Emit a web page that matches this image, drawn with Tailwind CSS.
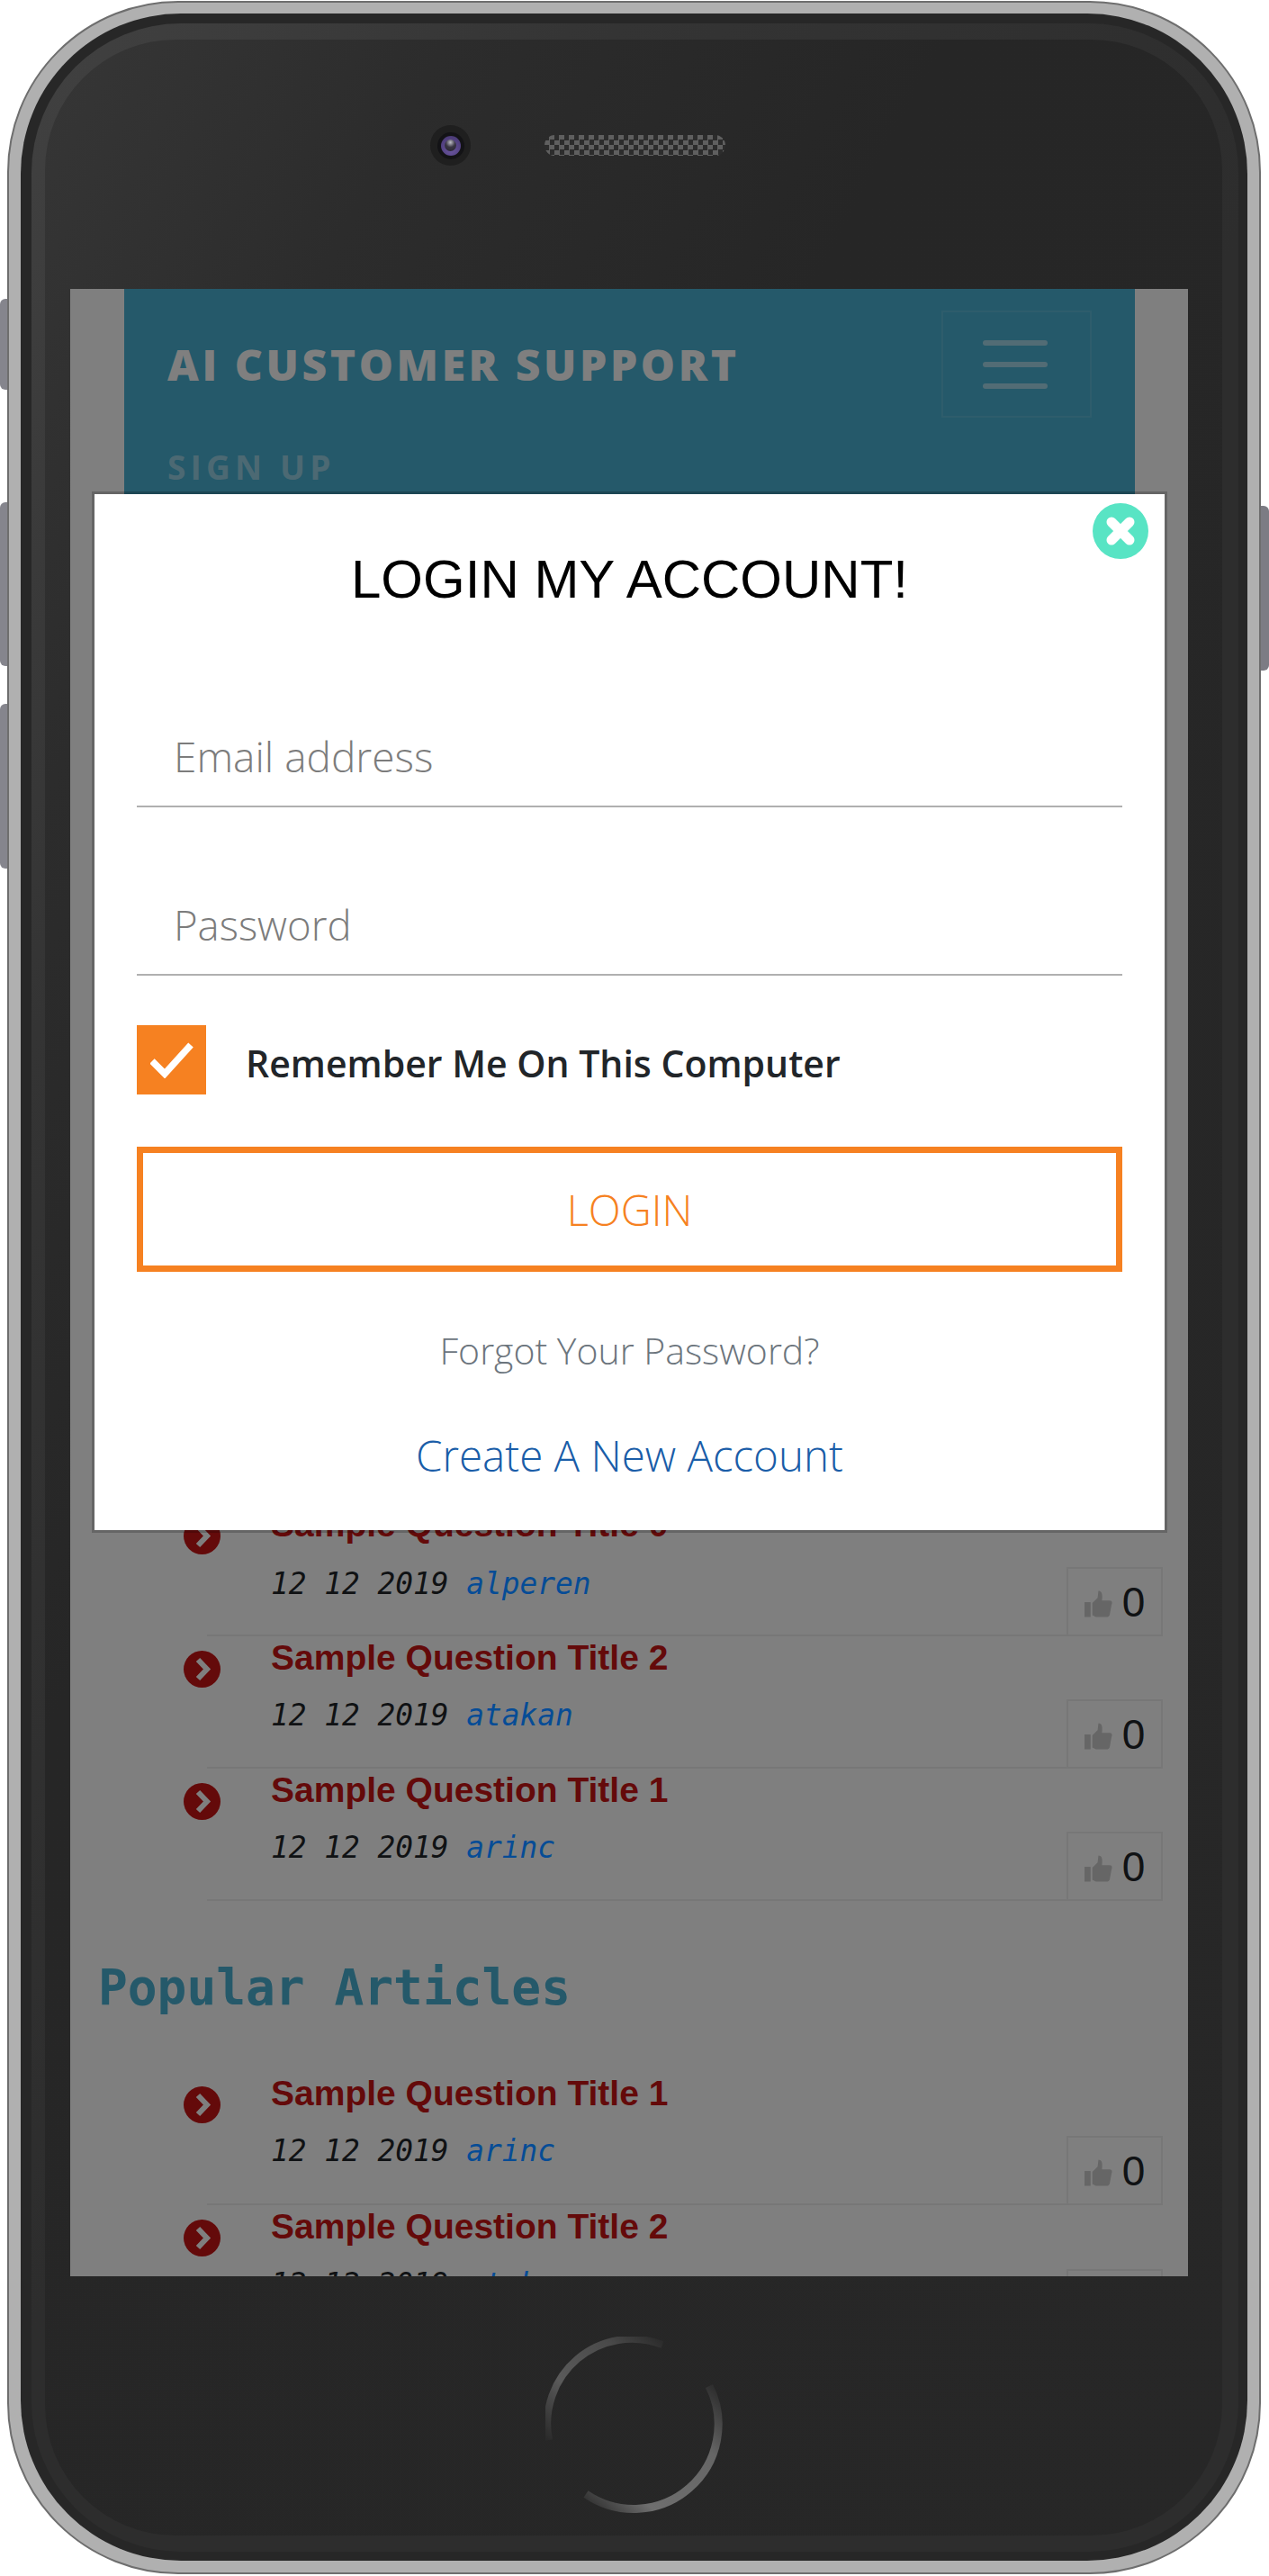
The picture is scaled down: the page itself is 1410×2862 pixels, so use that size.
<!doctype html>
<html>
<head>
<meta charset="utf-8">
<script src="https://cdn.jsdelivr.net/npm/@tailwindcss/browser@4"></script>
</head>
<body class="bg-white">
<div class="relative w-[1410px] h-[2862px] overflow-hidden pt-[1px] pl-[8px]">
  <!-- hardware buttons -->
  <div class="absolute left-0 top-[332px] w-[10px] h-[101px] rounded-l-[6px] bg-[#85858d]"></div>
  <div class="absolute left-0 top-[558px] w-[10px] h-[182px] rounded-l-[6px] bg-[#85858d]"></div>
  <div class="absolute left-0 top-[782px] w-[10px] h-[183px] rounded-l-[6px] bg-[#85858d]"></div>
  <div class="absolute left-[1398px] top-[562px] w-[12px] h-[183px] rounded-r-[6px] bg-[#7c7c84]"></div>

  <!-- phone body -->
  <div class="relative w-[1393px] h-[2859px] rounded-[190px] border-[2px] border-[#6e6e6e] bg-[#b0b0b0] pl-[13px] pr-[13px] pt-[12px] pb-[13px]">
    <div class="w-full h-full rounded-[178px] bg-[#272727] pl-[12px] pr-[10px] pt-[11px] pb-[10px]">
      <div class="w-full h-full rounded-[166px] bg-[linear-gradient(120deg,#414141_0%,#343434_22%,#2d2d2d_50%,#2d2d2d_100%)] pl-[15px] pr-[18px] pt-[18px] pb-[18px]">
        <div class="w-full h-full rounded-[145px] bg-[linear-gradient(118deg,#363636_0%,#2c2c2c_16%,#262626_36%,#272727_100%)] pl-[28px]">

          <!-- top bezel -->
          <div class="h-[277px] flex items-start pl-[400px] pt-[95px]">
            <div class="w-[45px] h-[45px] rounded-full bg-[#1f1f1f] flex items-center justify-center">
              <div class="w-[30px] h-[30px] rounded-full bg-[#131316] flex items-center justify-center">
                <div class="w-[22px] h-[22px] rounded-full bg-[radial-gradient(circle_at_50%_70%,#6a55a0_0%,#43346c_100%)] flex items-center justify-center">
                  <div class="w-[13px] h-[13px] rounded-full bg-[radial-gradient(circle_at_50%_25%,#bdbdc6_0%,#3a3644_45%,#26232e_100%)]"></div>
                </div>
              </div>
            </div>
            <div class="ml-[82px] mt-[11px] w-[201px] h-[23px] rounded-full bg-[repeating-conic-gradient(#5f5f5f_0%_25%,#2c2c2c_0%_50%)] bg-[length:11px_11px]"></div>
          </div>

          <!-- screen -->
          <div class="relative w-[1242px] h-[2208px] overflow-hidden bg-white">
            <header class="ml-[60px] w-[1123px] h-[300px] bg-[#4ab2d4] pl-[48px] pr-[48px] pt-[24px]">
              <div class="flex justify-between items-start">
                <div class="mt-[28px] font-['Open_Sans',sans-serif] font-extrabold text-[48px] leading-[64px] tracking-[3.6px] text-white">AI CUSTOMER SUPPORT</div>
                <div class="w-[167px] h-[119px] border-[2px] border-white/10 flex flex-col items-center justify-center gap-[18px] pr-[4px]">
                  <div class="w-[72px] h-[6px] rounded-full bg-white/50"></div>
                  <div class="w-[72px] h-[6px] rounded-full bg-white/50"></div>
                  <div class="w-[72px] h-[6px] rounded-full bg-white/50"></div>
                </div>
              </div>
              <div class="mt-[31px] font-['Open_Sans',sans-serif] font-bold text-[37px] leading-[48px] tracking-[5.2px] text-white/45">SIGN UP</div>
            </header>

            <main class="pt-[1049px]">
              <!-- Questions -->
              <div class="flex h-[146px] pl-[126px] pr-[28px]">
                <svg class="w-[41px] h-[41px] mt-[16px] shrink-0" viewBox="0 0 41 41"><circle cx="20.5" cy="20.5" r="20.5" fill="#c81414"/><path d="M16 10 26 20.500 16 31" fill="none" stroke="#fff" stroke-width="6"/></svg>
                <div class="ml-[56px] flex-1 pt-[1px]">
                  <div class="font-['Liberation_Sans',sans-serif] font-bold text-[39px] leading-[46px] text-[#c81414]">Sample Question Title 0</div>
                  <div class="mt-[21px] font-['DejaVu_Sans_Mono',monospace] italic text-[32.8px] leading-[44px] text-[#212529]">12 12 2019 <span class="relative z-10 text-[#064c96]">alperen</span></div>
                </div>
                <div class="self-end flex items-center justify-center gap-[11px] w-[107px] h-[75px] border-[2px] border-[#eeeeee] border-b-0 text-[#212529] font-['Liberation_Sans',sans-serif] text-[46px] leading-[50px]">
                  <svg class="w-[31px] h-[30px] mt-[4px]" viewBox="0 0 32 30" fill="#cccccc"><path d="M0 13h7v17H0z"/><path d="M9 14 15 8 16 0C20 0 21 4 20 11H29C32 11 32 14 31 16L29 27C28.500 29 27 30 25 30H13L9 28Z"/></svg><span>0</span>
                </div>
              </div>
              <div class="ml-[152px] mr-[28px] h-[2px] bg-[#eeeeee]"></div>

              <div class="flex h-[145px] pl-[126px] pr-[28px]">
                <svg class="w-[41px] h-[41px] mt-[16px] shrink-0" viewBox="0 0 41 41"><circle cx="20.5" cy="20.5" r="20.5" fill="#c81414"/><path d="M16 10 26 20.500 16 31" fill="none" stroke="#fff" stroke-width="6"/></svg>
                <div class="ml-[56px] flex-1 pt-[1px]">
                  <div class="font-['Liberation_Sans',sans-serif] font-bold text-[39px] leading-[46px] text-[#c81414]">Sample Question Title 2</div>
                  <div class="mt-[19px] font-['DejaVu_Sans_Mono',monospace] italic text-[32.8px] leading-[44px] text-[#212529]">12 12 2019 <span class="relative z-10 text-[#064c96]">atakan</span></div>
                </div>
                <div class="self-end flex items-center justify-center gap-[11px] w-[107px] h-[75px] border-[2px] border-[#eeeeee] border-b-0 text-[#212529] font-['Liberation_Sans',sans-serif] text-[46px] leading-[50px]">
                  <svg class="w-[31px] h-[30px] mt-[4px]" viewBox="0 0 32 30" fill="#cccccc"><path d="M0 13h7v17H0z"/><path d="M9 14 15 8 16 0C20 0 21 4 20 11H29C32 11 32 14 31 16L29 27C28.500 29 27 30 25 30H13L9 28Z"/></svg><span>0</span>
                </div>
              </div>
              <div class="ml-[152px] mr-[28px] h-[2px] bg-[#eeeeee]"></div>

              <div class="flex h-[145px] pl-[126px] pr-[28px]">
                <svg class="w-[41px] h-[41px] mt-[16px] shrink-0" viewBox="0 0 41 41"><circle cx="20.5" cy="20.5" r="20.5" fill="#c81414"/><path d="M16 10 26 20.500 16 31" fill="none" stroke="#fff" stroke-width="6"/></svg>
                <div class="ml-[56px] flex-1 pt-[1px]">
                  <div class="font-['Liberation_Sans',sans-serif] font-bold text-[39px] leading-[46px] text-[#c81414]">Sample Question Title 1</div>
                  <div class="mt-[19px] font-['DejaVu_Sans_Mono',monospace] italic text-[32.8px] leading-[44px] text-[#212529]">12 12 2019 <span class="relative z-10 text-[#064c96]">arinc</span></div>
                </div>
                <div class="self-end flex items-center justify-center gap-[11px] w-[107px] h-[75px] border-[2px] border-[#eeeeee] border-b-0 text-[#212529] font-['Liberation_Sans',sans-serif] text-[46px] leading-[50px]">
                  <svg class="w-[31px] h-[30px] mt-[4px]" viewBox="0 0 32 30" fill="#cccccc"><path d="M0 13h7v17H0z"/><path d="M9 14 15 8 16 0C20 0 21 4 20 11H29C32 11 32 14 31 16L29 27C28.500 29 27 30 25 30H13L9 28Z"/></svg><span>0</span>
                </div>
              </div>
              <div class="ml-[152px] mr-[28px] h-[2px] bg-[#eeeeee]"></div>

              <!-- Popular -->
              <h2 class="h-[190px] pl-[31px] pt-[61px] font-['DejaVu_Sans_Mono',monospace] font-bold text-[54.5px] leading-[70px] text-[#4ab2d4]">Popular Articles</h2>

              <div class="flex h-[146px] pl-[126px] pr-[28px]">
                <svg class="w-[41px] h-[41px] mt-[16px] shrink-0" viewBox="0 0 41 41"><circle cx="20.5" cy="20.5" r="20.5" fill="#c81414"/><path d="M16 10 26 20.500 16 31" fill="none" stroke="#fff" stroke-width="6"/></svg>
                <div class="ml-[56px] flex-1 pt-[1px]">
                  <div class="font-['Liberation_Sans',sans-serif] font-bold text-[39px] leading-[46px] text-[#c81414]">Sample Question Title 1</div>
                  <div class="mt-[19px] font-['DejaVu_Sans_Mono',monospace] italic text-[32.8px] leading-[44px] text-[#212529]">12 12 2019 <span class="relative z-10 text-[#064c96]">arinc</span></div>
                </div>
                <div class="self-end flex items-center justify-center gap-[11px] w-[107px] h-[75px] border-[2px] border-[#eeeeee] border-b-0 text-[#212529] font-['Liberation_Sans',sans-serif] text-[46px] leading-[50px]">
                  <svg class="w-[31px] h-[30px] mt-[4px]" viewBox="0 0 32 30" fill="#cccccc"><path d="M0 13h7v17H0z"/><path d="M9 14 15 8 16 0C20 0 21 4 20 11H29C32 11 32 14 31 16L29 27C28.500 29 27 30 25 30H13L9 28Z"/></svg><span>0</span>
                </div>
              </div>
              <div class="ml-[152px] mr-[28px] h-[2px] bg-[#eeeeee]"></div>

              <div class="flex h-[146px] pl-[126px] pr-[28px]">
                <svg class="w-[41px] h-[41px] mt-[16px] shrink-0" viewBox="0 0 41 41"><circle cx="20.5" cy="20.5" r="20.5" fill="#c81414"/><path d="M16 10 26 20.500 16 31" fill="none" stroke="#fff" stroke-width="6"/></svg>
                <div class="ml-[56px] flex-1 pt-[1px]">
                  <div class="font-['Liberation_Sans',sans-serif] font-bold text-[39px] leading-[46px] text-[#c81414]">Sample Question Title 2</div>
                  <div class="mt-[19px] font-['DejaVu_Sans_Mono',monospace] italic text-[32.8px] leading-[44px] text-[#212529]">12 12 2019 <span class="relative z-10 text-[#064c96]">atakan</span></div>
                </div>
                <div class="self-end flex items-center justify-center gap-[11px] w-[107px] h-[75px] border-[2px] border-[#eeeeee] border-b-0 text-[#212529] font-['Liberation_Sans',sans-serif] text-[46px] leading-[50px]">
                  <svg class="w-[31px] h-[30px] mt-[4px]" viewBox="0 0 32 30" fill="#cccccc"><path d="M0 13h7v17H0z"/><path d="M9 14 15 8 16 0C20 0 21 4 20 11H29C32 11 32 14 31 16L29 27C28.500 29 27 30 25 30H13L9 28Z"/></svg><span>0</span>
                </div>
              </div>
            </main>

            <!-- backdrop -->
            <div class="absolute inset-0 bg-black/50"></div>

            <!-- modal -->
            <div class="absolute z-20 left-[24px] top-[225px] w-[1195px] h-[1157px] border-[3px] border-black/20 bg-white bg-clip-padding">
              <div class="relative px-[47px] text-center">
                <svg class="absolute right-[18px] top-[10px] w-[62px] h-[62px]" viewBox="0 0 62 62"><circle cx="31" cy="31" r="31" fill="#58e4c4"/><path d="M21 21 41 41M41 21 21 41" stroke="#fff" stroke-width="11" stroke-linecap="round"/></svg>
                <h1 class="h-[252px] pt-[55px] font-['Liberation_Sans',sans-serif] text-[60px] leading-[80px] text-black">LOGIN MY ACCOUNT!</h1>
                <div class="h-[96px] pt-[9px] border-b-[2px] border-[#b0b0b0] pl-[41px] text-left font-['Open_Sans',sans-serif] font-light text-[46px] leading-[60px] text-[#7c7c7c]">Email address</div>
                <div class="mt-[91px] h-[96px] pt-[9px] border-b-[2px] border-[#b0b0b0] pl-[41px] text-left font-['Open_Sans',sans-serif] font-light text-[45.500px] leading-[60px] text-[#7c7c7c]">Password</div>
                <div class="mt-[55px] flex items-center h-[77px]">
                  <div class="w-[77px] h-[77px] bg-[#f68121] flex items-center justify-center">
                    <svg class="w-[48px] h-[40px]" viewBox="0 0 48 40"><path d="M2 21 16 35 45 3" fill="none" stroke="#fff" stroke-width="7.500"/></svg>
                  </div>
                  <div class="ml-[44px] mt-[6px] font-['Open_Sans',sans-serif] font-semibold text-[41px] leading-[56px] text-[#212529]">Remember Me On This Computer</div>
                </div>
                <div class="mt-[58px] h-[139px] pt-[2px] border-[7px] border-[#f68121] flex items-center justify-center font-['Open_Sans',sans-serif] font-light text-[47px] text-[#f68121]">LOGIN</div>
                <div class="mt-[60px] font-['Open_Sans',sans-serif] font-light text-[41px] leading-[54px] text-[#6c757d]">Forgot Your Password?</div>
                <div class="mt-[60px] font-['Open_Sans',sans-serif] font-light text-[47.500px] leading-[60px] text-[#1a5da8]">Create A New Account</div>
              </div>
            </div>
          </div>

          <!-- home button -->
          <div class="pl-[528px] pt-[67px]">
            <svg class="w-[197px] h-[197px]" viewBox="0 0 197 197">
              <defs>
                <linearGradient id="a" x1="0" y1="1" x2="1" y2="0"><stop offset="0" stop-color="#2a2a2a"/><stop offset=".35" stop-color="#5a5a5a"/><stop offset=".75" stop-color="#4a4a4a"/><stop offset="1" stop-color="#2a2a2a"/></linearGradient>
                <linearGradient id="b" x1="1" y1="0" x2="0" y2="1"><stop offset="0" stop-color="#2a2a2a"/><stop offset=".3" stop-color="#666"/><stop offset=".75" stop-color="#6e6e6e"/><stop offset="1" stop-color="#2a2a2a"/></linearGradient>
              </defs>
              <path d="M4 115A94 94 0 0 1 130 9" fill="none" stroke="url(#a)" stroke-width="8"/>
              <path d="M182 55A94 94 0 0 1 45 175" fill="none" stroke="url(#b)" stroke-width="9"/>
            </svg>
          </div>
        </div>
      </div>
    </div>
  </div>
</div>
</body>
</html>
